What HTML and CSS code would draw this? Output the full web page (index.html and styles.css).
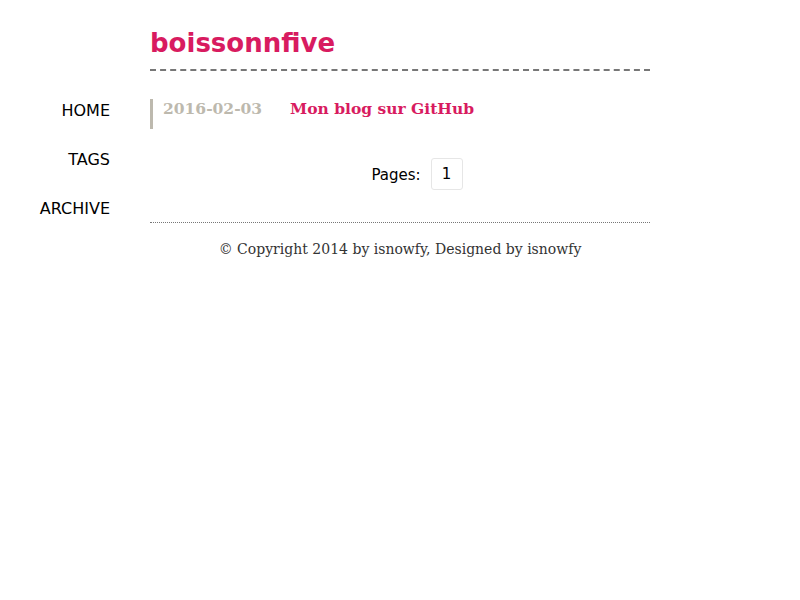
FILE: index.html
```html
<!DOCTYPE html>
<html>
<head>
<meta charset="utf-8">
<link rel="stylesheet" href="styles.css">
</head>
<body>
<div class="page">
  <aside class="nav">
    <a href="#">HOME</a>
    <a href="#">TAGS</a>
    <a href="#">ARCHIVE</a>
  </aside>
  <main class="main">
    <header class="header"><h1 class="site-title">boissonnfive</h1></header>
    <ul class="posts">
      <li class="post"><span class="date">2016-02-03</span><a class="post-title" href="#">Mon blog sur GitHub</a></li>
    </ul>
    <div class="pager"><span class="pages-label">Pages:</span><span class="page-num">1</span></div>
    <footer class="footer">© Copyright 2014 by isnowfy, Designed by isnowfy</footer>
  </main>
</div>
</body>
</html>
```
FILE: styles.css
```css
* { box-sizing: border-box; }
body { margin: 0; background: #fff; }
.page { display: flex; }
.nav {
  width: 150px;
  padding: 100px 40px 0 0;
  display: flex;
  flex-direction: column;
  align-items: flex-end;
  gap: 27px;
  font-family: "DejaVu Sans", sans-serif;
  font-size: 16px;
}
.nav a { color: #000; text-decoration: none; line-height: 22px; }
.main { width: 500px; }
.header { border-bottom: 2px dashed #777; padding-top: 25px; height: 71px; }
.site-title {
  margin: 0;
  font-family: "Comic Sans MS", "DejaVu Sans", sans-serif;
  font-weight: bold;
  font-size: 26px;
  line-height: 36px;
  color: #d81b60;
}
.posts { list-style: none; margin: 28px 0 0; padding: 0; }
.post {
  border-left: 3px solid #bdb9ae;
  height: 30px;
  padding-left: 10px;
  display: flex;
  align-items: flex-start;
  font-family: "DejaVu Serif", serif;
  font-weight: bold;
  font-size: 15.5px;
  line-height: 20px;
}
.date { color: #bdb9ae; width: 127px; }
.post-title { color: #d81b60; text-decoration: none; }
.pager {
  display: flex;
  justify-content: center;
  align-items: center;
  gap: 10px;
  margin-top: 29px;
  padding-left: 34px;
  font-family: "DejaVu Sans", sans-serif;
  font-size: 15px;
}
.pages-label { position: relative; top: 1px; }
.page-num {
  display: inline-block;
  width: 32px;
  height: 32px;
  line-height: 30px;
  text-align: center;
  border: 1px solid #e6e6e6;
  border-radius: 3px;
}
.footer {
  margin-top: 32px;
  border-top: 1px dotted #777;
  padding-top: 18px;
  text-align: center;
  font-family: "DejaVu Serif", serif;
  font-size: 14px;
  color: #333;
}
```
